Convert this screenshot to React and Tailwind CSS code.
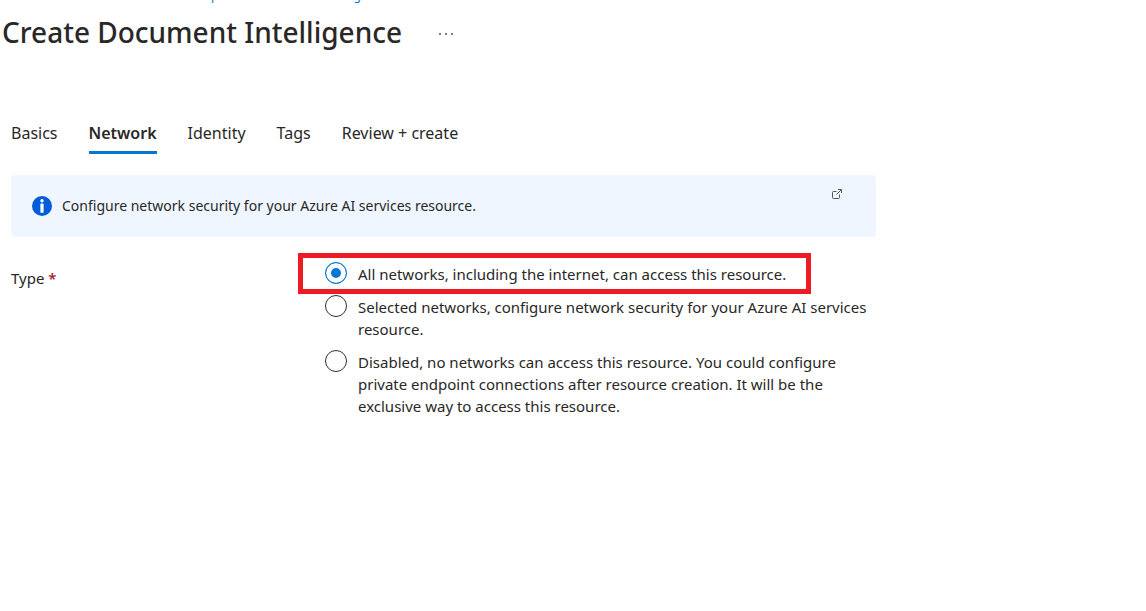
import { useState } from "react";

const crumbs = ["Home", "Create a resource", "Marketplace", "Document Intelligence"];
const tabs = ["Basics", "Network", "Identity", "Tags", "Review + create"];

const options = [
  { id: "all", text: "All networks, including the internet, can access this resource." },
  {
    id: "selected",
    text: "Selected networks, configure network security for your Azure AI services resource.",
  },
  {
    id: "disabled",
    text: "Disabled, no networks can access this resource. You could configure private endpoint connections after resource creation. It will be the exclusive way to access this resource.",
  },
];

function InfoIcon() {
  return (
    <svg className="size-5 shrink-0" viewBox="0 0 20 20" aria-hidden="true">
      <circle cx="10" cy="10" r="10" fill="#015cda" />
      <circle cx="10" cy="4.8" r="1.7" fill="#fff" />
      <rect x="8.4" y="7.6" width="3.2" height="9.2" rx="0.4" fill="#fff" />
    </svg>
  );
}

function ExternalIcon() {
  return (
    <svg className="size-[10px]" viewBox="0 0 10 10" fill="none" stroke="#555" aria-hidden="true">
      <path d="M4.5 2.5h-3a1 1 0 0 0-1 1v5a1 1 0 0 0 1 1h5a1 1 0 0 0 1-1v-3" />
      <path d="M4.5 5.5l4.5-4.5M6 .5h3.5v3.5" />
    </svg>
  );
}

function Option({ option, checked, onChange }) {
  return (
    <label className="flex items-start gap-[11px]">
      <input
        type="radio"
        name="network-type"
        value={option.id}
        checked={checked}
        onChange={onChange}
        className="size-[22px] shrink-0 appearance-none rounded-full border border-[#323130] bg-white checked:border-[#0078d4] checked:bg-[#0078d4] checked:shadow-[inset_0_0_0_5px_white]"
      />
      <span className="pt-px">{option.text}</span>
    </label>
  );
}

export default function App() {
  const [type, setType] = useState("all");
  const [first, ...rest] = options;

  return (
    <main className="font-['Noto_Sans','Open_Sans',sans-serif] text-[15px] leading-[22px] text-[#292827]">
      <nav
        aria-label="Breadcrumb"
        className="flex h-[3px] items-end overflow-hidden whitespace-nowrap text-xs leading-[14px] text-[#0078d4]"
      >
        <ol className="flex gap-1.5">
          {crumbs.map((c) => (
            <li key={c} className="flex gap-1.5">
              <a href="#">{c}</a>
              <span>&gt;</span>
            </li>
          ))}
        </ol>
      </nav>

      <header className="flex items-center gap-[33px] pt-[11px] pl-0.5">
        <h1 className="text-[28px] leading-9 font-medium">Create Document Intelligence</h1>
        <button type="button" aria-label="More actions" className="flex gap-1 p-1 pt-2">
          <span className="size-0.5 rounded-full bg-[#555]" />
          <span className="size-0.5 rounded-full bg-[#555]" />
          <span className="size-0.5 rounded-full bg-[#555]" />
        </button>
      </header>

      <div className="max-w-[876px] pt-[71px] pl-[11px]">
        <div role="tablist" className="flex gap-[31px] text-base leading-6">
          {tabs.map((t) => (
            <button
              key={t}
              type="button"
              role="tab"
              aria-selected={t === "Network"}
              className="border-b-[3px] border-transparent pb-[6px] aria-selected:border-[#0078d4] aria-selected:font-semibold"
            >
              {t}
            </button>
          ))}
        </div>

        <section className="mt-[21px] flex min-h-[62px] items-center gap-[10px] rounded-sm bg-[#eff6ff] px-[21px] text-sm">
          <InfoIcon />
          <p className="grow">Configure network security for your Azure AI services resource.</p>
          <a href="#" aria-label="Learn more" className="mr-[13px] self-start pt-[14px]">
            <ExternalIcon />
          </a>
        </section>

        <fieldset className="mt-4 flex">
          <div className="w-[287px] shrink-0 pt-[14px]" id="type-label">
            Type <span className="font-semibold text-[#a4262c]">*</span>
          </div>
          <div role="radiogroup" aria-labelledby="type-label" className="grow">
            <div className="mr-[65px] border-[5px] border-[#ed1c24] py-1 pl-[22px]">
              <Option option={first} checked={type === first.id} onChange={() => setType(first.id)} />
            </div>
            <div className="mt-px flex flex-col gap-[10px] pl-[27px]">
              {rest.map((o) => (
                <Option key={o.id} option={o} checked={type === o.id} onChange={() => setType(o.id)} />
              ))}
            </div>
          </div>
        </fieldset>
      </div>
    </main>
  );
}
